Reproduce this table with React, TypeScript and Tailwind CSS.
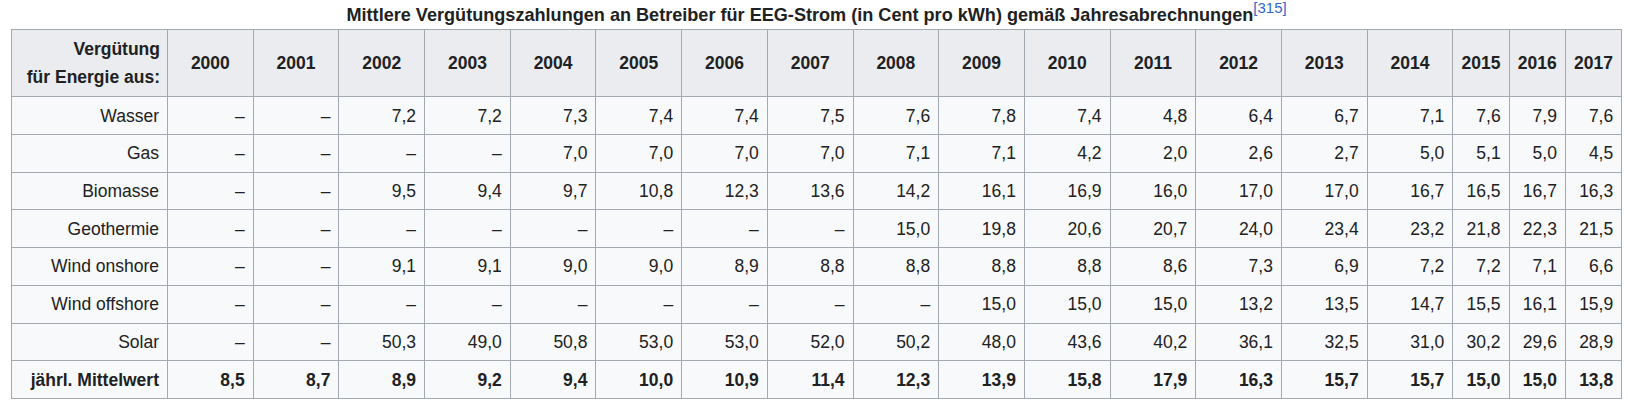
const years = [
  "2000", "2001", "2002", "2003", "2004", "2005", "2006", "2007", "2008",
  "2009", "2010", "2011", "2012", "2013", "2014", "2015", "2016", "2017",
];

const rows: { label: string; values: string[] }[] = [
  { label: "Wasser", values: ["–", "–", "7,2", "7,2", "7,3", "7,4", "7,4", "7,5", "7,6", "7,8", "7,4", "4,8", "6,4", "6,7", "7,1", "7,6", "7,9", "7,6"] },
  { label: "Gas", values: ["–", "–", "–", "–", "7,0", "7,0", "7,0", "7,0", "7,1", "7,1", "4,2", "2,0", "2,6", "2,7", "5,0", "5,1", "5,0", "4,5"] },
  { label: "Biomasse", values: ["–", "–", "9,5", "9,4", "9,7", "10,8", "12,3", "13,6", "14,2", "16,1", "16,9", "16,0", "17,0", "17,0", "16,7", "16,5", "16,7", "16,3"] },
  { label: "Geothermie", values: ["–", "–", "–", "–", "–", "–", "–", "–", "15,0", "19,8", "20,6", "20,7", "24,0", "23,4", "23,2", "21,8", "22,3", "21,5"] },
  { label: "Wind onshore", values: ["–", "–", "9,1", "9,1", "9,0", "9,0", "8,9", "8,8", "8,8", "8,8", "8,8", "8,6", "7,3", "6,9", "7,2", "7,2", "7,1", "6,6"] },
  { label: "Wind offshore", values: ["–", "–", "–", "–", "–", "–", "–", "–", "–", "15,0", "15,0", "15,0", "13,2", "13,5", "14,7", "15,5", "16,1", "15,9"] },
  { label: "Solar", values: ["–", "–", "50,3", "49,0", "50,8", "53,0", "53,0", "52,0", "50,2", "48,0", "43,6", "40,2", "36,1", "32,5", "31,0", "30,2", "29,6", "28,9"] },
];

const average = ["8,5", "8,7", "8,9", "9,2", "9,4", "10,0", "10,9", "11,4", "12,3", "13,9", "15,8", "17,9", "16,3", "15,7", "15,7", "15,0", "15,0", "13,8"];

export default function App() {
  return (
    <div className="min-h-[406px] bg-white pl-[11px] font-['Liberation_Sans',Arial,sans-serif] text-[17.5px] leading-[28px] text-[#202122]">
      <table className="w-[1610px] table-fixed border-collapse border border-[#a2a9b1] bg-[#f8f9fa]">
        <caption className="h-[29px] pt-px text-center text-[18.1px] font-bold leading-[28px]">
          Mittlere Vergütungszahlungen an Betreiber für EEG-Strom (in Cent pro kWh) gemäß Jahresabrechnungen
          <sup className="relative -top-[1px] align-super text-[15px] font-normal leading-none text-[#3366cc]">[315]</sup>
        </caption>
        <colgroup>
          <col className="w-[156px]" />
          {years.map((y, i) => (
            <col key={y} className={i < 15 ? "w-[85.69px]" : "w-[56.3px]"} />
          ))}
        </colgroup>
        <thead>
          <tr>
            <th className="border border-[#a2a9b1] bg-[#eaecf0] px-[7px] py-[5.2px] text-right font-bold">
              Vergütung
              <br />
              für Energie aus:
            </th>
            {years.map((y) => (
              <th key={y} className="border border-[#a2a9b1] bg-[#eaecf0] px-[4px] py-[5.2px] text-center font-bold">
                {y}
              </th>
            ))}
          </tr>
        </thead>
        <tbody>
          {rows.map((r) => (
            <tr key={r.label}>
              <td className="border border-[#a2a9b1] px-[8px] py-[4.35px] text-right whitespace-nowrap">{r.label}</td>
              {r.values.map((v, i) => (
                <td key={i} className="border border-[#a2a9b1] px-[8px] py-[4.35px] text-right">
                  {v}
                </td>
              ))}
            </tr>
          ))}
          <tr>
            <td className="border border-[#a2a9b1] px-[8px] py-[4.35px] text-right font-bold whitespace-nowrap">jährl. Mittelwert</td>
            {average.map((v, i) => (
              <td key={i} className="border border-[#a2a9b1] px-[8px] py-[4.35px] text-right font-bold">
                {v}
              </td>
            ))}
          </tr>
        </tbody>
      </table>
    </div>
  );
}
